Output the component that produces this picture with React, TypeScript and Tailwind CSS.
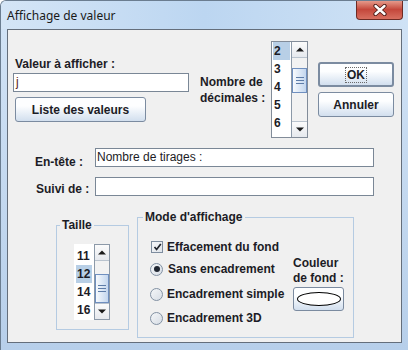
import React from "react";

const sw = "font-['Liberation_Sans',Arial,sans-serif] text-[12px] text-[#1c1c26]";

function Btn({ children, className = "" }: { children: React.ReactNode; className?: string }) {
  return (
    <div
      className={`flex items-center justify-center rounded-[3px] border border-[#7b8ba0] bg-gradient-to-b from-[#fdfeff] from-35% to-[#d2dfee] font-bold ${className}`}
    >
      {children}
    </div>
  );
}

function Arrow({ up = false, className = "" }: { up?: boolean; className?: string }) {
  return (
    <div className={`flex h-[16px] items-center justify-center bg-gradient-to-b from-[#fbfbfb] to-[#e6e9ee] ${className}`}>
      <svg width="8" height="5" viewBox="0 0 8 5">
        {up ? <polygon points="0,4.5 8,4.5 4,0.5" fill="#1a1a1a" /> : <polygon points="0,0.5 8,0.5 4,4.5" fill="#1a1a1a" />}
      </svg>
    </div>
  );
}

function Scroll({ gap, thumb, className = "" }: { gap: string; thumb: string; className?: string }) {
  return (
    <div className={`flex w-[16px] flex-col bg-[#f2f2f2] ${className}`}>
      <Arrow up className="border-b border-[#b9c3ce]" />
      <div className={gap} />
      <div
        className={`flex flex-col items-center justify-center gap-[2px] border border-[#6f8fbf] bg-gradient-to-r from-[#f7fafd] to-[#c3d6ee] ${thumb}`}
      >
        <div className="h-px w-[8px] bg-[#5d7ca8]" />
        <div className="h-px w-[8px] bg-[#5d7ca8]" />
        <div className="h-px w-[8px] bg-[#5d7ca8]" />
      </div>
      <div className="flex-1" />
      <Arrow className="border-t border-[#b9c3ce]" />
    </div>
  );
}

function Item({ v, sel = false }: { v: string; sel?: boolean }) {
  return (
    <div className={`h-[18px] pl-[1px] font-bold leading-[18px] ${sel ? "bg-[#b8cfe6]" : ""}`}>{v}</div>
  );
}

function Radio({ on = false }: { on?: boolean }) {
  return (
    <div className="flex h-[13px] w-[13px] items-center justify-center rounded-full border border-[#8291a3] bg-gradient-to-br from-[#f4f6f8] to-[#d7dde5]">
      {on && <div className="h-[6px] w-[6px] rounded-full bg-[#1f2530]" />}
    </div>
  );
}

export default function App() {
  return (
    <div className={`h-[350px] w-[408px] overflow-hidden rounded-tl-[6px] border-l border-t border-[#6b7d90] bg-gradient-to-b from-[#d3e4f6] to-[#b7cfea] ${sw}`}>
      <div className="flex h-[28px] items-start justify-between bg-gradient-to-r from-[#d4e5f6] via-[#bcd6f1] to-[#cfe2f5]">
        <div className="mt-[7px] pl-[6px] font-['Noto_Sans',sans-serif] text-[12px] font-normal leading-[16px] text-[#1a1a1a]">
          Affichage de valeur
        </div>
        <div className="mr-[5px] flex h-[20px] w-[47px] -translate-y-px items-center justify-center rounded-b-[4px] border border-t-0 border-[#6e2b24] bg-gradient-to-b from-[#e8a294] via-[#c4473b] to-[#d86f60]">
          <svg width="14" height="12" viewBox="0 0 14 12">
            <path d="M2.5 2 L11.5 10 M11.5 2 L2.5 10" stroke="#4a1a16" strokeWidth="4.2" strokeLinecap="round" />
            <path d="M2.5 2 L11.5 10 M11.5 2 L2.5 10" stroke="#ffffff" strokeWidth="2.4" strokeLinecap="round" />
          </svg>
        </div>
      </div>

      <div className="ml-[6px] flex h-[314px] w-[395px] flex-col border border-[#646e7b] bg-[#f0f0f0]">
        {/* top row */}
        <div className="flex h-[107px] items-start">
          <div className="ml-[5px] flex w-[176px] flex-col pt-[26px]">
            <div className="h-[16px] pl-[2px] font-bold leading-[16px]">Valeur à afficher :</div>
            <div className="mt-[1px] h-[19px] border border-[#7a8796] bg-white pl-[2px] leading-[17px] text-[#5a1e1a]">j</div>
            <Btn className="ml-[2px] mt-[5px] h-[25px] w-[131px]">Liste des valeurs</Btn>
          </div>
          <div className="ml-[11px] w-[71px] pt-[44px] font-bold leading-[16px]">
            Nombre de
            <br />
            décimales :
          </div>
          <div className="mt-[11px] flex h-[97px] w-[37px] border border-[#828c99] bg-white">
            <div className="flex-1 px-[1px]">
              <Item v="2" sel />
              <Item v="3" />
              <Item v="4" />
              <Item v="5" />
              <Item v="6" />
            </div>
            <Scroll gap="h-[10px]" thumb="h-[25px]" className="border-l border-[#8c99a8]" />
          </div>
          <div className="ml-[10px] flex w-[76px] flex-col">
            <Btn className="mt-[32px] h-[25px] border-2 border-[#5f7088]">
              <span className="border border-dotted border-[#6a6a6a] px-px leading-[14px]">OK</span>
            </Btn>
            <Btn className="mt-[5px] h-[25px]">Annuler</Btn>
          </div>
        </div>

        {/* header / suffix */}
        <div className="mt-[11px] flex items-start">
          <div className="ml-[27px] mt-[6px] w-[60px] font-bold leading-[16px]">En-tête :</div>
          <div className="h-[19px] w-[279px] border border-[#7a8796] bg-white pl-[1px] leading-[17px]">Nombre de tirages :</div>
        </div>
        <div className="mt-[7px] flex items-start">
          <div className="ml-[28px] mt-[4px] w-[59px] font-bold leading-[16px]">Suivi de :</div>
          <div className="h-[19px] w-[279px] border border-[#7a8796] bg-white" />
        </div>

        {/* groups */}
        <div className="mt-[20px] flex items-start">
          <div className="relative ml-[48px] mt-[8px] h-[105px] w-[73px] border border-[#b5cbe2]">
            <div className="absolute left-[3px] top-[-9px] bg-[#f0f0f0] px-[2px] font-bold leading-[16px]">Taille</div>
            <div className="ml-[17px] mt-[18px] flex h-[76px]">
              <div className="w-[20px] bg-white px-[2px] pt-[3px]">
                <Item v="11" />
                <Item v="12" sel />
                <Item v="14" />
                <Item v="16" />
              </div>
              <Scroll gap="h-[13px]" thumb="h-[30px]" className="border border-[#8c99a8]" />
            </div>
          </div>

          <div className="relative ml-[8px] flex h-[121px] w-[217px] border border-[#b5cbe2]">
            <div className="absolute left-[5px] top-[-9px] bg-[#f0f0f0] px-[2px] font-bold leading-[16px]">Mode d'affichage</div>
            <div className="ml-[12px] flex w-[143px] flex-col font-bold">
              <div className="mt-[20px] flex h-[18px] items-center gap-[4px] pl-[1px]">
                <div className="flex h-[12px] w-[12px] items-center justify-center border border-[#7e8d9f] bg-gradient-to-br from-[#f6f7f9] to-[#dfe4ea]">
                  <svg width="9" height="8" viewBox="0 0 9 8">
                    <path d="M1.5 4 L3.6 6.5 L7.8 1" stroke="#20242c" strokeWidth="1.7" fill="none" />
                  </svg>
                </div>
                <span>Effacement du fond</span>
              </div>
              <div className="mt-[4px] flex h-[18px] items-center gap-[5px]">
                <Radio on />
                <span>Sans encadrement</span>
              </div>
              <div className="mt-[7px] flex h-[18px] items-center gap-[4px]">
                <Radio />
                <span>Encadrement simple</span>
              </div>
              <div className="mt-[6px] flex h-[18px] items-center gap-[4px]">
                <Radio />
                <span>Encadrement 3D</span>
              </div>
            </div>
            <div className="flex flex-col pt-[38px] font-bold leading-[15px]">
              <div>Couleur</div>
              <div>de fond :</div>
              <Btn className="mt-[1px] h-[24px] w-[51px]">
                <div className="h-[14px] w-[44px] rounded-[50%] border border-black bg-white" />
              </Btn>
            </div>
          </div>
        </div>
      </div>
    </div>
  );
}
